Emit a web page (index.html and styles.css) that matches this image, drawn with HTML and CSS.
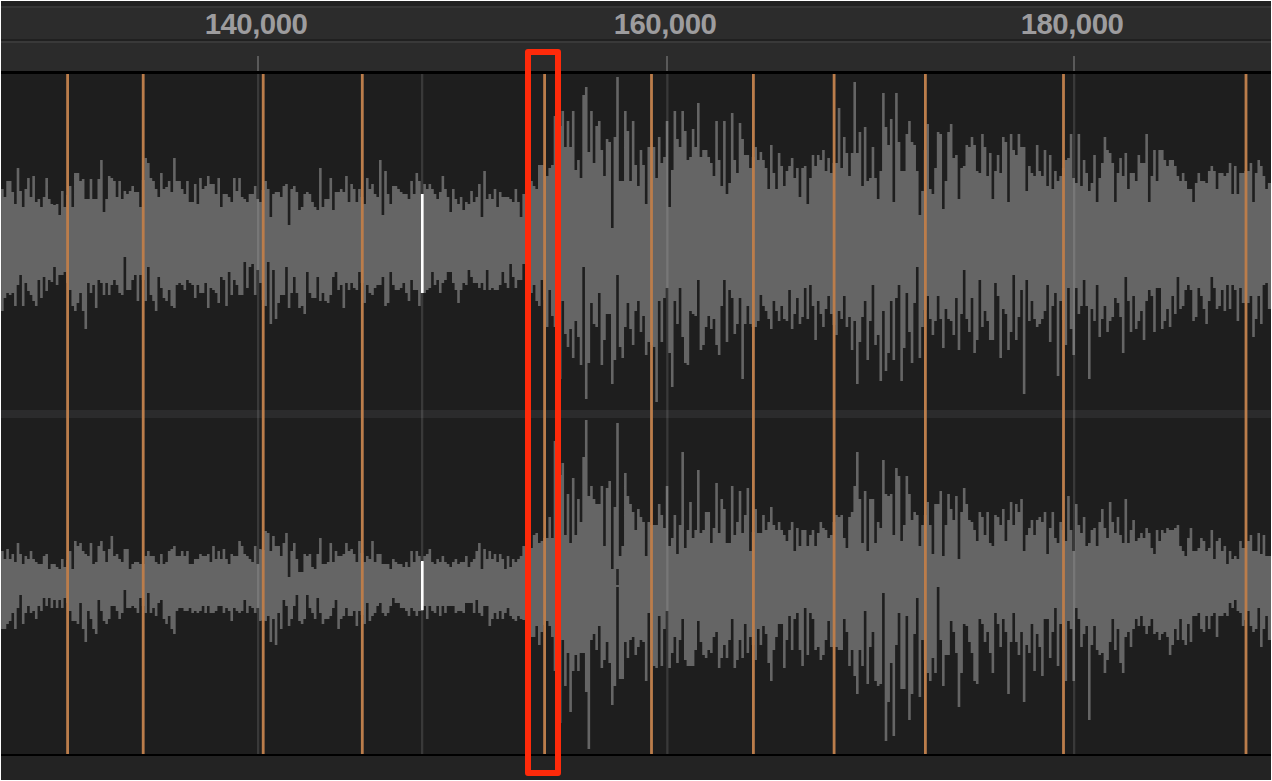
FILE: index.html
```html
<!DOCTYPE html>
<html lang="en">
<head>
    <meta charset="UTF-8">
    <meta name="viewport" content="width=device-width, initial-scale=1.0">
    <title>Waveform Editor</title>
    <link rel="stylesheet" href="styles.css">
</head>
<body>
    <div class="editor">
        <div class="ruler">
            <div class="ruler-top"></div>
            <div class="ruler-labels">
                <span class="ruler-label" style="left: 255px">140,000</span>
                <span class="ruler-label" style="left: 664px">160,000</span>
                <span class="ruler-label" style="left: 1071px">180,000</span>
            </div>
            <div class="ruler-ticks">
                <span class="tick" style="left: 256px"></span>
                <span class="tick" style="left: 665px"></span>
                <span class="tick" style="left: 1072px"></span>
            </div>
        </div>

        <div class="tracks">
            <svg class="wave" id="wave" viewBox="1 74 1270 680"></svg>
        </div>

        <div class="footer"></div>
        <div class="selection"></div>
    </div>

    <script src="waveform.js"></script>
</body>
</html>
```

FILE: styles.css
```css
* {
    margin: 0;
    padding: 0;
    box-sizing: border-box;
}

body {
    width: 1272px;
    height: 781px;
    overflow: hidden;
    background: #fff;
    font-family: 'Liberation Sans', Arial, sans-serif;
}

.editor {
    position: relative;
    display: flex;
    flex-direction: column;
    width: 1272px;
    height: 781px;
    border: 1px solid #fff;
    overflow: hidden;
}

/* Ruler */
.ruler {
    height: 73px;
    background: #2b2b2b;
    border-bottom: 3px solid #000;
}

.ruler-top {
    height: 7px;
    background: #222;
    border-bottom: 2px solid #363636;
}

.ruler-labels {
    position: relative;
    height: 35px;
    background: #2c2c2c;
    border-bottom: 2px solid #393939;
    box-shadow: inset 0 -2px 0 #202020;
}

.ruler-label {
    position: absolute;
    top: 0;
    transform: translateX(-50%);
    font-size: 29.4px;
    font-weight: bold;
    letter-spacing: -0.5px;
    line-height: 32px;
    color: #9d9c9e;
}

.ruler-ticks {
    position: relative;
    height: 28px;
}

.tick {
    position: absolute;
    bottom: 0;
    width: 2px;
    height: 15px;
    background: #5a5a5a;
}

/* Tracks */
.tracks {
    height: 680px;
    background: #1e1e1e;
}

.wave {
    display: block;
    width: 1270px;
    height: 680px;
}

.channel {
    fill: #656565;
}

.gap {
    fill: #242424;
}

.divider {
    fill: #2b2b2c;
}

.grid {
    fill: rgba(255, 255, 255, 0.12);
}

.marker {
    fill: #bb7d4b;
}

.playhead {
    fill: #fff;
}

.footer {
    flex: 1;
    background: #232323;
    border-top: 2px solid #000;
}

.selection {
    position: absolute;
    left: 524px;
    top: 48px;
    width: 36px;
    height: 727px;
    border: 6px solid #ff2a0a;
    border-radius: 3px;
}
```

FILE: waveform.js
```js
// Peak outlines, one value per column, in y pixels
const upperTop = [
    189,197,181,181,192,204,168,191,207,189,178,197,176,202,199,207,197,178,199,204,
    205,204,215,191,207,195,186,207,173,173,181,179,199,199,179,199,199,179,160,212,
    199,176,178,181,197,181,199,191,194,191,186,192,192,207,180,158,163,178,181,189,
    197,173,189,187,181,192,158,181,181,189,194,181,202,202,184,204,178,189,186,176,
    184,184,194,178,207,194,194,197,202,178,191,178,197,199,202,194,194,186,199,202,
    190,181,189,217,194,192,192,197,186,184,225,189,186,192,210,207,194,192,194,202,
    207,210,168,207,199,199,178,210,192,192,189,192,176,202,184,189,202,189,197,204,
    178,189,184,194,197,160,215,171,194,204,186,186,189,192,194,194,199,181,194,173,
    181,194,184,189,184,189,194,199,192,176,189,197,212,189,199,204,197,210,202,204,
    191,202,197,184,217,171,199,194,199,189,207,192,197,197,197,199,202,189,202,217,
    194,188,183,181,186,189,165,165,165,176,168,165,116,120,126,111,147,121,147,111,
    170,160,178,95,87,152,111,163,126,121,150,176,139,142,228,137,77,181,181,111,
    131,181,121,165,186,150,165,204,147,147,147,178,137,163,157,121,207,170,111,139,
    147,111,131,160,157,129,147,103,157,150,150,157,163,176,121,160,186,121,194,183,
    113,160,173,123,139,155,155,168,157,147,160,152,160,168,189,145,173,189,153,166,
    186,171,166,158,178,168,197,168,166,204,178,155,166,155,160,150,171,158,173,163,
    163,108,168,137,153,176,153,82,153,132,186,127,181,178,147,178,199,171,93,127,
    145,119,202,93,142,171,171,134,121,142,145,171,215,191,150,124,189,194,168,132,
    134,209,181,132,124,158,155,199,168,166,145,147,137,145,171,173,134,147,176,153,
    199,171,155,173,137,142,202,134,150,155,134,147,147,191,166,173,176,145,171,176,
    150,186,155,189,171,181,176,168,160,158,134,178,183,134,186,160,173,191,183,155,
    202,178,163,137,150,153,163,202,173,158,176,153,189,173,173,181,155,163,163,134,
    202,176,150,181,150,150,160,166,160,160,166,176,181,173,181,189,189,202,183,173,
    181,181,183,171,166,171,189,173,173,176,173,163,194,166,194,173,173,171,171,163,
    202,173,160,166,176,189,183,183
];

const upperBottom = [
    311,298,293,295,293,306,285,275,306,283,291,295,301,306,280,298,277,291,280,282,
    267,285,275,275,272,283,290,306,311,303,293,311,329,283,293,285,308,280,283,295,
    283,295,285,280,285,293,295,257,290,290,280,275,301,275,280,301,267,295,301,311,
    277,288,298,301,290,306,308,285,283,285,290,280,283,285,298,285,293,293,283,308,
    288,290,293,303,277,280,306,272,295,280,285,295,295,262,288,267,264,295,270,283,
    300,306,262,324,270,319,303,295,295,267,308,293,277,293,308,306,314,272,293,298,
    298,277,301,293,301,303,295,277,272,290,285,308,283,290,283,288,290,272,283,303,
    285,293,295,288,285,285,277,306,303,272,285,290,290,288,283,293,301,280,290,290,
    306,293,293,290,288,272,285,280,293,283,280,272,272,283,290,303,290,283,285,270,
    277,283,283,288,283,290,270,290,288,290,290,285,272,283,288,264,277,288,280,280,
    264,280,287,293,285,301,306,280,300,327,290,316,327,340,379,301,334,347,329,358,
    321,337,365,267,399,363,303,324,327,293,365,340,314,314,384,360,275,347,358,327,
    303,329,345,311,301,332,316,355,342,345,347,402,301,342,298,288,353,387,301,324,
    288,337,363,365,311,314,316,280,350,345,327,316,329,319,345,355,306,280,342,290,
    298,334,324,298,379,324,306,324,327,327,321,295,306,311,319,329,301,311,321,306,
    319,321,290,329,314,298,324,317,288,319,285,306,340,301,314,327,309,296,314,325,
    335,311,319,296,327,317,350,321,384,342,317,301,360,321,285,345,335,381,311,371,
    353,301,360,298,285,381,348,293,332,363,303,267,358,327,310,296,319,335,321,296,
    319,348,309,319,321,335,298,350,314,270,319,332,298,353,340,280,327,311,321,340,
    340,283,296,358,309,314,350,332,275,340,317,290,394,280,321,301,319,327,324,319,
    311,285,342,306,293,376,301,320,345,288,329,355,288,314,306,280,306,379,309,321,
    285,337,319,306,332,321,317,298,303,317,353,277,301,332,296,329,321,311,340,301,
    290,296,332,288,288,329,321,309,327,296,314,277,309,306,290,285,290,321,317,288,
    296,309,324,301,277,288,309,306,290,311,285,309,285,290,321,288,303,303,303,296,
    337,319,296,324,285,283,309,309
];

const lowerTop = [
    551,559,549,559,554,562,543,554,564,556,559,551,559,562,564,564,556,554,569,564,
    564,567,569,559,567,560,551,569,541,546,543,551,554,556,543,564,562,546,541,551,
    562,549,536,556,554,559,562,549,549,569,564,562,562,564,564,556,551,556,556,562,
    564,554,564,562,551,549,546,556,556,551,556,551,564,564,559,559,554,556,556,554,
    562,546,559,551,559,549,559,564,554,556,556,541,546,554,556,559,562,546,564,549,
    550,531,533,551,536,546,546,556,543,533,577,551,543,559,572,572,554,556,554,567,
    569,554,538,564,564,562,543,562,551,556,556,554,543,551,549,554,562,541,553,562,
    556,559,541,562,554,554,564,564,564,569,559,562,564,564,567,562,567,551,562,551,
    556,562,556,554,549,562,564,559,562,556,562,564,567,562,559,564,562,562,556,567,
    562,559,551,543,569,549,559,551,559,554,562,554,559,569,556,567,559,562,559,556,
    546,547,548,548,535,533,543,541,538,538,517,538,441,472,475,463,535,494,543,478,
    535,499,522,457,420,496,486,499,504,504,486,546,488,481,569,507,423,556,546,473,
    496,504,512,530,509,517,522,556,522,525,525,525,504,515,528,486,546,538,515,554,
    525,452,548,530,502,538,530,470,533,530,512,512,543,528,483,533,499,509,543,543,
    486,535,522,491,533,515,488,551,532,509,533,533,515,530,522,507,525,530,522,530,
    535,541,530,522,551,528,546,530,530,546,535,530,546,533,522,528,530,538,535,522,
    515,517,515,538,548,517,512,486,452,499,543,491,551,499,499,543,522,528,460,494,
    496,494,535,468,476,541,525,476,494,520,512,515,546,525,515,502,525,554,504,504,
    491,556,525,494,509,520,496,559,512,488,504,520,522,530,541,512,517,535,512,543,
    546,515,517,525,509,541,520,502,525,504,512,499,551,535,528,520,535,520,517,522,
    512,554,528,512,538,543,522,530,541,496,530,551,504,525,533,517,546,543,530,528,
    546,522,509,528,538,502,522,533,517,535,543,499,543,530,520,541,538,533,538,528,
    533,548,554,530,541,530,533,528,530,530,528,525,546,551,556,538,528,551,551,548,
    538,541,551,548,530,559,541,538,551,546,564,551,559,556,559,541,548,548,541,535,
    551,551,533,554,535,556,556,556
];

const lowerBottom = [
    629,629,624,621,613,629,608,595,624,613,606,613,611,619,606,611,598,606,598,608,
    600,608,600,608,598,603,611,621,621,624,603,629,642,611,619,629,634,600,611,621,
    624,619,606,606,611,619,613,590,608,608,606,608,613,598,606,613,593,613,608,616,
    603,600,619,624,616,629,634,611,608,608,611,611,608,613,611,613,611,606,613,606,
    613,613,611,606,606,613,608,611,621,608,611,613,611,600,613,606,608,613,608,621,
    620,621,616,642,619,645,613,629,600,606,626,619,606,595,621,624,619,595,608,613,
    619,598,613,624,619,619,616,608,600,629,619,616,608,616,616,611,626,611,615,624,
    603,621,616,613,606,603,613,616,613,606,598,603,603,608,608,611,616,608,611,616,
    611,611,606,619,606,611,613,606,616,606,613,606,606,606,613,611,611,613,603,603,
    603,613,600,613,616,606,606,626,619,613,619,611,619,613,608,616,619,621,616,619,
    620,622,625,637,637,626,645,632,625,621,626,637,671,690,723,640,686,653,712,671,
    655,671,653,653,692,749,640,634,650,626,668,660,642,663,705,686,587,679,679,642,
    658,640,637,655,647,640,642,681,613,650,666,668,616,666,629,611,668,653,637,663,
    640,619,660,666,666,666,650,621,642,655,658,650,653,637,632,668,658,645,658,640,
    619,668,660,640,658,624,653,637,645,660,629,645,626,634,663,681,650,637,624,624,
    668,640,616,650,619,613,650,666,608,655,613,619,650,647,660,655,640,621,647,647,
    647,650,650,619,632,666,650,676,694,650,666,611,684,647,632,681,686,684,593,741,
    702,663,736,645,613,689,689,616,720,694,634,598,697,640,660,673,681,658,673,587,
    640,686,655,655,621,632,653,707,673,624,626,642,653,681,684,619,624,642,632,653,
    673,613,624,647,619,632,694,642,613,642,655,632,702,645,653,624,671,634,647,676,
    619,619,658,632,608,666,624,650,681,621,629,681,608,619,647,634,626,720,645,626,
    650,655,653,673,660,642,619,650,629,663,673,637,632,647,629,619,626,616,626,634,
    626,619,634,632,640,634,632,637,655,645,629,640,619,640,645,624,642,616,616,613,
    629,632,616,629,616,613,637,616,616,613,616,603,608,600,611,613,626,620,611,626,
    632,629,608,647,629,616,640,640
];

const START = 1.05;
const STEP = 2.6066;
const svg = document.getElementById('wave');

function add(tag, attrs) {
    const el = document.createElementNS('http://www.w3.org/2000/svg', tag);
    for (const key in attrs) {
        el.setAttribute(key, attrs[key]);
    }
    svg.appendChild(el);
}

function rect(cls, x, y, width, height) {
    add('rect', { class: cls, x, y, width, height });
}

function channel(top, bottom) {
    const x = i => (START + i * STEP).toFixed(2);
    let d = 'M' + x(0) + ' ' + top[0];
    for (let i = 0; i < top.length; i++) {
        d += 'V' + top[i] + 'H' + x(i + 1);
    }
    for (let i = bottom.length - 1; i >= 0; i--) {
        d += 'V' + bottom[i] + 'H' + x(i);
    }
    add('path', { class: 'channel', d: d + 'Z' });
}

rect('divider', 1, 410, 1270, 8);
channel(upperTop, upperBottom);
channel(lowerTop, lowerBottom);

// silent sample in the lower channel
rect('gap', START + 236 * STEP, 569, STEP, 16);

[257, 421, 666.2, 1073].forEach(x => rect('grid', x, 74, 2.3, 680));

[67.6, 143.2, 263.2, 362.3, 544.6, 651.5, 753.4, 834.1, 925.4, 1063.5, 1246]
    .forEach(x => rect('marker', x - 1.4, 74, 2.8, 680));

rect('playhead', 421, 194, 2.6, 99);
rect('playhead', 421, 561, 2.6, 49);
```
